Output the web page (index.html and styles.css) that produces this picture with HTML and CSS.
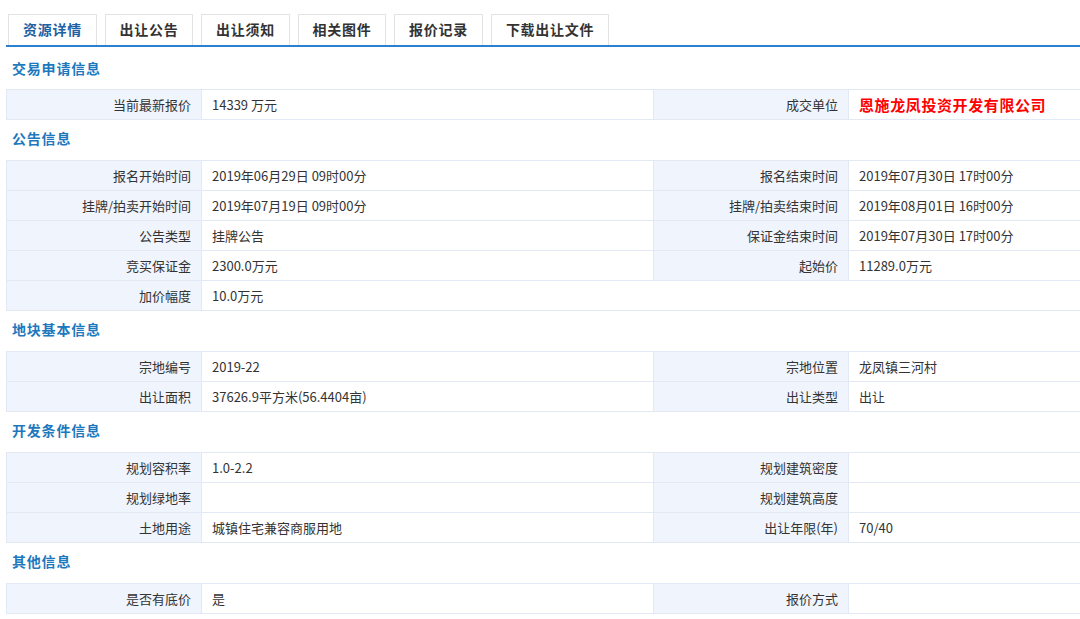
FILE: index.html
```html
<!DOCTYPE html>
<html lang="zh-CN">
<head>
<meta charset="utf-8">
<title>资源详情</title>
<link rel="stylesheet" href="styles.css">
</head>
<body>
<div class="page">
  <div class="tabs">
    <div class="tab active">资源详情</div>
    <div class="tab">出让公告</div>
    <div class="tab">出让须知</div>
    <div class="tab">相关图件</div>
    <div class="tab">报价记录</div>
    <div class="tab">下载出让文件</div>
  </div>

  <div class="section-title first">交易申请信息</div>
  <table class="info">
    <colgroup><col class="c1"><col class="c2"><col class="c3"><col class="c4"></colgroup>
    <tr><th>当前最新报价</th><td>14339 万元</td><th>成交单位</th><td class="red">恩施龙凤投资开发有限公司</td></tr>
  </table>

  <div class="section-title">公告信息</div>
  <table class="info">
    <colgroup><col class="c1"><col class="c2"><col class="c3"><col class="c4"></colgroup>
    <tr><th>报名开始时间</th><td>2019年06月29日 09时00分</td><th>报名结束时间</th><td>2019年07月30日 17时00分</td></tr>
    <tr><th>挂牌/拍卖开始时间</th><td>2019年07月19日 09时00分</td><th>挂牌/拍卖结束时间</th><td>2019年08月01日 16时00分</td></tr>
    <tr><th>公告类型</th><td>挂牌公告</td><th>保证金结束时间</th><td>2019年07月30日 17时00分</td></tr>
    <tr><th>竞买保证金</th><td>2300.0万元</td><th>起始价</th><td>11289.0万元</td></tr>
    <tr><th>加价幅度</th><td colspan="3">10.0万元</td></tr>
  </table>

  <div class="section-title">地块基本信息</div>
  <table class="info">
    <colgroup><col class="c1"><col class="c2"><col class="c3"><col class="c4"></colgroup>
    <tr><th>宗地编号</th><td>2019-22</td><th>宗地位置</th><td>龙凤镇三河村</td></tr>
    <tr><th>出让面积</th><td>37626.9平方米(56.4404亩)</td><th>出让类型</th><td>出让</td></tr>
  </table>

  <div class="section-title">开发条件信息</div>
  <table class="info">
    <colgroup><col class="c1"><col class="c2"><col class="c3"><col class="c4"></colgroup>
    <tr><th>规划容积率</th><td>1.0-2.2</td><th>规划建筑密度</th><td></td></tr>
    <tr><th>规划绿地率</th><td></td><th>规划建筑高度</th><td></td></tr>
    <tr><th>土地用途</th><td>城镇住宅兼容商服用地</td><th>出让年限(年)</th><td>70/40</td></tr>
  </table>

  <div class="section-title">其他信息</div>
  <table class="info">
    <colgroup><col class="c1"><col class="c2"><col class="c3"><col class="c4"></colgroup>
    <tr><th>是否有底价</th><td>是</td><th>报价方式</th><td></td></tr>
  </table>
</div>
</body>
</html>
```

FILE: styles.css
```css
* { box-sizing: border-box; }
html, body { margin: 0; padding: 0; background: #fff; }
body {
  font-family: "Noto Sans CJK SC", "DejaVu Sans", sans-serif;
  color: #333;
  overflow: hidden;
}
.page {
  width: 1080px;
  padding: 14px 0 0 6px;
}
.tabs {
  display: flex;
  gap: 8px;
  padding-left: 2px;
  height: 33px;
  border-bottom: 2px solid #2b80cf;
}
.tab {
  height: 31px;
  line-height: 29px;
  padding: 0;
  border: 1px solid #e3e3e3;
  border-bottom: none;
  background: #fff;
  font-size: 14px;
  font-weight: bold;
  letter-spacing: 0.7px;
  white-space: nowrap;
  color: #333;
  text-align: center;
}
.tab:nth-child(1) { width: 89px; }
.tab:nth-child(2) { width: 88px; }
.tab:nth-child(3) { width: 89px; }
.tab:nth-child(4) { width: 88px; }
.tab:nth-child(5) { width: 89px; }
.tab:nth-child(6) { width: 118px; }
.tab.active { color: #1e62a3; }
.section-title {
  height: 40px;
  line-height: 37px;
  padding-left: 6px;
  font-size: 14px;
  font-weight: bold;
  letter-spacing: 0.8px;
  color: #1d78bd;
}
.section-title.first { height: 42px; line-height: 42px; }
.info {
  width: 1074px;
  border-collapse: collapse;
  table-layout: fixed;
  font-size: 13px;
}
.c1 { width: 195px; }
.c2 { width: 452px; }
.c3 { width: 195px; }
.c4 { width: 232px; }
.info th, .info td {
  height: 30px;
  border: 1px solid #e2e9f5;
  font-weight: normal;
  white-space: nowrap;
  padding: 0 10px;
}
.info th {
  background: #eff4fd;
  text-align: right;
  color: #333;
}
.info td {
  background: #fff;
  text-align: left;
  color: #333;
}
.info td.red {
  color: #f00;
  font-weight: bold;
  font-size: 15px;
  letter-spacing: 0.6px;
}
```
